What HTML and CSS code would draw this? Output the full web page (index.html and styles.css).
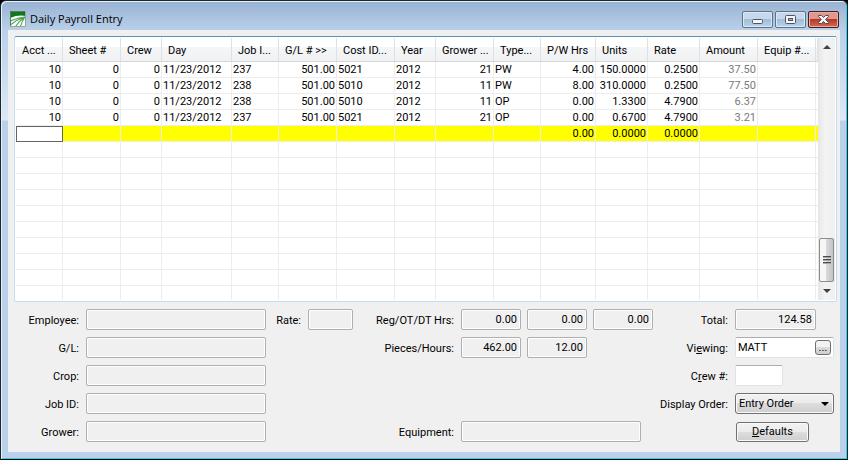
FILE: index.html
```
<!DOCTYPE html>
<html lang="en">
<head>
  <meta charset="UTF-8">
  <meta name="viewport" content="width=device-width, initial-scale=1.0">
  <title>Daily Payroll Entry</title>
  <link rel="stylesheet" href="styles.css">
</head>
<body>
  <div class="window">
    <header class="titlebar">
      <svg class="app-icon" viewBox="0 0 16 16" width="16" height="16" aria-hidden="true">
        <rect width="16" height="16" fill="#fbfdf9"/>
        <path d="M0 0 H16 V5 Q8 3.500 0 7 Z" fill="#0d7a1c"/>
        <path d="M1 9.800 Q8 6.500 15 6 M1 13.500 Q7 8.500 15 6 M5.500 15.500 Q9 10 15 6 M10.500 15.500 Q12 10 15 6" fill="none" stroke="#4fa258" stroke-width="1.100"/>
        <path d="M.5 16 V.5 H16" fill="none" stroke="#5f7862"/>
        <path d="M15.500 0 V15.500 H0" fill="none" stroke="#9aa398"/>
      </svg>
      <h1>Daily Payroll Entry</h1>
      <div class="window-buttons">
        <button type="button" class="win-btn" aria-label="Minimize">
          <svg viewBox="0 0 13 11" width="13" height="11"><rect x="1.500" y="5.500" width="10" height="4" rx="1" fill="#f6f6f6" stroke="#4f5766"/></svg>
        </button>
        <button type="button" class="win-btn" aria-label="Maximize">
          <svg viewBox="0 0 13 11" width="13" height="11"><rect x="1.500" y="1.500" width="10" height="8" rx="1" fill="#f6f6f6" stroke="#4f5766"/><rect x="4.500" y="4.500" width="4" height="2" fill="#8fb0d4" stroke="#4f5766"/></svg>
        </button>
        <button type="button" class="win-btn close" aria-label="Close">
          <svg viewBox="0 0 13 11" width="13" height="11"><path d="M1.500 1.500 H4.500 L6.500 3.500 L8.500 1.500 H11.500 V2.500 L8.700 5.500 L11.500 8.500 V9.500 H8.500 L6.500 7.500 L4.500 9.500 H1.500 V8.500 L4.300 5.500 L1.500 2.500 Z" fill="#f6f6f6" stroke="#5b4650"/></svg>
        </button>
      </div>
    </header>

    <main class="client">
      <div class="grid-panel">
        <div class="grid-view">
          <table>
            <colgroup>
              <col class="w47"><col class="w58"><col class="w41"><col class="w70">
              <col class="w47"><col class="w58"><col class="w58"><col class="w41">
              <col class="w58"><col class="w47"><col class="w55"><col class="w52">
              <col class="w52"><col class="w58"><col class="w58"><col>
            </colgroup>
            <thead>
              <tr>
                <th>Acct ...</th><th>Sheet #</th><th>Crew</th><th>Day</th>
                <th>Job I...</th><th>G/L # &gt;&gt;</th><th>Cost ID...</th><th>Year</th>
                <th>Grower ...</th><th>Type...</th><th>P/W Hrs</th><th>Units</th>
                <th>Rate</th><th>Amount</th><th>Equip #...</th><th></th>
              </tr>
            </thead>
            <tbody id="entries">
              <tr>
                <td class="num">10</td><td class="num">0</td><td class="num">0</td><td>11/23/2012</td>
                <td>237</td><td class="num">501.00</td><td>5021</td><td>2012</td>
                <td class="num">21</td><td>PW</td><td class="num">4.00</td><td class="num">150.0000</td>
                <td class="num">0.2500</td><td class="num amount">37.50</td><td></td><td></td>
              </tr>
              <tr>
                <td class="num">10</td><td class="num">0</td><td class="num">0</td><td>11/23/2012</td>
                <td>238</td><td class="num">501.00</td><td>5010</td><td>2012</td>
                <td class="num">11</td><td>PW</td><td class="num">8.00</td><td class="num">310.0000</td>
                <td class="num">0.2500</td><td class="num amount">77.50</td><td></td><td></td>
              </tr>
              <tr>
                <td class="num">10</td><td class="num">0</td><td class="num">0</td><td>11/23/2012</td>
                <td>238</td><td class="num">501.00</td><td>5010</td><td>2012</td>
                <td class="num">11</td><td>OP</td><td class="num">0.00</td><td class="num">1.3300</td>
                <td class="num">4.7900</td><td class="num amount">6.37</td><td></td><td></td>
              </tr>
              <tr>
                <td class="num">10</td><td class="num">0</td><td class="num">0</td><td>11/23/2012</td>
                <td>237</td><td class="num">501.00</td><td>5021</td><td>2012</td>
                <td class="num">21</td><td>OP</td><td class="num">0.00</td><td class="num">0.6700</td>
                <td class="num">4.7900</td><td class="num amount">3.21</td><td></td><td></td>
              </tr>
              <tr class="current">
                <td class="editing"><input type="text" aria-label="Acct #"></td><td></td><td></td><td></td>
                <td></td><td></td><td></td><td></td>
                <td></td><td></td><td class="num">0.00</td><td class="num">0.0000</td>
                <td class="num">0.0000</td><td></td><td></td><td></td>
              </tr>
            </tbody>
          </table>
        </div>
        <div class="scrollbar">
          <button type="button" class="arrow up" aria-label="Scroll up"></button>
          <div class="thumb"><i></i><i></i><i></i></div>
          <button type="button" class="arrow down" aria-label="Scroll down"></button>
        </div>
      </div>

      <form class="details">
        <label class="c1" for="employee">Employee:</label>
        <input class="c2" id="employee" type="text" readonly>
        <label class="c3" for="rate">Rate:</label>
        <input class="c4" id="rate" type="text" readonly>
        <label class="c5" for="reg">Reg/OT/DT Hrs:</label>
        <div class="c6 hours">
          <input class="num" id="reg" type="text" value="0.00" readonly>
          <input class="num" type="text" value="0.00" aria-label="OT hours" readonly>
          <input class="num" type="text" value="0.00" aria-label="DT hours" readonly>
        </div>
        <label class="c7" for="total">Total:</label>
        <input class="c8 num total" id="total" type="text" value="124.58" readonly>

        <label class="c1" for="gl">G/L:</label>
        <input class="c2" id="gl" type="text" readonly>
        <label class="c5" for="pieces">Pieces/Hours:</label>
        <div class="c6 hours">
          <input class="num" id="pieces" type="text" value="462.00" readonly>
          <input class="num" type="text" value="12.00" aria-label="Hours" readonly>
        </div>
        <label class="c7" for="viewing">Vi<u>e</u>wing:</label>
        <div class="c8 lookup">
          <input id="viewing" type="text" value="MATT">
          <button type="button" aria-label="Look up">...</button>
        </div>

        <label class="c1" for="crop">Crop:</label>
        <input class="c2" id="crop" type="text" readonly>
        <label class="c7" for="crew">C<u>r</u>ew #:</label>
        <input class="c8 crew" id="crew" type="text">

        <label class="c1" for="job">Job ID:</label>
        <input class="c2" id="job" type="text" readonly>
        <label class="c7" for="order">Display Order:</label>
        <div class="c8 dropdown">
          <select id="order">
            <option>Entry Order</option>
          </select>
        </div>

        <label class="c1" for="grower">Grower:</label>
        <input class="c2" id="grower" type="text" readonly>
        <label class="c5" for="equipment">Equipment:</label>
        <input class="c6 equipment" id="equipment" type="text" readonly>
        <button type="button" class="c8 defaults"><u>D</u>efaults</button>
      </form>
    </main>
  </div>

  <script>
    // pad the list with blank rows below the entry line
    const entries = document.getElementById('entries');
    for (let r = 0; r < 10; r++) {
      const row = entries.insertRow();
      for (let c = 0; c < 16; c++) {
        row.insertCell();
      }
    }
  </script>
</body>
</html>
```
FILE: styles.css
```
* {
  box-sizing: border-box;
}

body {
  margin: 0;
  background: #000;
  font-family: Roboto, sans-serif;
  font-size: 11px;
  line-height: 16px;
  color: #000;
}

input,
select,
button {
  margin: 0;
  font: inherit;
  color: inherit;
}

.window {
  display: flex;
  flex-direction: column;
  height: 100vh;
  min-width: 840px;
  padding: 0 6px 7px;
  border: 1px solid #1c2630;
  border-bottom-color: #000;
  border-radius: 6px 6px 0 0;
  background: linear-gradient(#98b2d2 0, #b9d1ea 30px, #dce8f5 119px, #b9d1ea 120px);
  box-shadow: inset 1px 1px 0 #e8f0f8, inset -1px -1px 0 #2bd2ec;
}

.titlebar {
  display: flex;
  align-items: center;
  height: 29px;
  padding: 7px 2px 0 3px;
}

.titlebar h1 {
  flex: 1;
  margin: 0 0 0 4px;
  font-family: "Open Sans", sans-serif;
  font-size: 11px;
  font-weight: normal;
}

.window-buttons {
  display: flex;
  gap: 2px;
}

.win-btn {
  display: flex;
  align-items: center;
  justify-content: center;
  width: 31px;
  height: 17px;
  padding: 0;
  border: 1px solid #5f7288;
  border-radius: 2px;
  background: linear-gradient(#c6d8eb 50%, #a3bdd8 50%, #b9d3ec);
  box-shadow: inset 0 0 0 1px #dce8f4;
}

.win-btn.close {
  border-color: #4a1a20;
  background: linear-gradient(#dd9a8c 50%, #b93824 50%, #cf6c50);
  box-shadow: inset 0 0 0 1px #e6b0a4;
}

.client {
  flex: 1;
  display: flex;
  flex-direction: column;
  min-height: 0;
  margin: 0 1px;
  padding: 6px 3px 10px 6px;
  background: #f0f0f0;
}

.grid-panel {
  flex: 1;
  display: flex;
  min-height: 0;
  padding: 1px;
  border: 1px solid #c3dcee;
  border-top-color: #5a92ba;
  border-radius: 2px;
  background: #fff;
}

.grid-view {
  flex: 1;
  overflow: hidden;
}

table {
  width: 100%;
  table-layout: fixed;
  border-collapse: separate;
  border-spacing: 0;
}

.w41 { width: 41px; }
.w47 { width: 47px; }
.w52 { width: 52px; }
.w55 { width: 55px; }
.w58 { width: 58px; }
.w70 { width: 70px; }

th {
  height: 24px;
  padding: 2px 0 0 6px;
  border-right: 1px solid #dfe0e2;
  border-bottom: 1px solid #d5d5d5;
  background: linear-gradient(#fff 40%, #f5f6f8 40%, #f0f1f3);
  font-weight: normal;
  text-align: left;
  white-space: nowrap;
}

th:last-child {
  padding: 0;
}

td {
  height: 16px;
  padding: 1px 1px 0;
  border-right: 1px solid #ededed;
  border-bottom: 1px solid #ededed;
  line-height: 14px;
  white-space: nowrap;
}

td:last-child {
  padding: 0;
  border-right: 0;
}

.num {
  text-align: right;
}

.amount {
  color: #7a7a7a;
}

.current td {
  background: #ff0;
}

.current .editing {
  padding: 0;
  border: 0;
}

.editing input {
  display: block;
  width: 100%;
  height: 16px;
  padding: 0 2px;
  border: 1px solid #646464;
  background: #fff;
  outline: 0;
}

.scrollbar {
  display: flex;
  flex-direction: column;
  width: 17px;
  background: linear-gradient(90deg, #e6e6e6, #f3f3f3 40%, #efefef);
}

.arrow {
  display: flex;
  align-items: center;
  justify-content: center;
  height: 18px;
  padding: 0;
  border: 0;
  background: none;
}

.arrow::before {
  content: "";
  border: 4px solid transparent;
  border-top: 0;
  border-bottom: 4px solid #404040;
}

.arrow.down::before {
  border-top: 4px solid #404040;
  border-bottom: 0;
}

.thumb {
  display: flex;
  flex-direction: column;
  align-items: center;
  justify-content: center;
  gap: 1px;
  height: 44px;
  margin: auto 1px 0;
  border: 1px solid #8c8c8c;
  border-radius: 2px;
  background: linear-gradient(90deg, #f6f6f6 45%, #d9d9dc 50%, #c4c4c8);
}

.thumb i {
  width: 8px;
  height: 2px;
  border-top: 1px solid #4c4c4c;
  background: #a8a8a8;
}

.details {
  display: grid;
  grid-template-columns: 65px 180px 28px 45px 94px 192px 1fr 99px;
  grid-auto-rows: 21px;
  gap: 7px;
  margin: 7px 5px 0 0;
}

.c1 { grid-column: 1; }
.c2 { grid-column: 2; }
.c3 { grid-column: 3; }
.c4 { grid-column: 4; }
.c5 { grid-column: 5; }
.c6 { grid-column: 6; }
.c7 { grid-column: 7; }
.c8 { grid-column: 8; }

.details label {
  padding-top: 4px;
  text-align: right;
  white-space: nowrap;
}

.details input {
  width: 100%;
  height: 21px;
  padding: 0 3px 1px 2px;
  border: 1px solid #dde2ea;
  border-top-color: #abadb3;
  border-radius: 2px;
  background: #fff;
}

.details input:read-only {
  border-color: #afafaf;
  background: #f0f0f0;
  box-shadow: inset 0 0 0 1px #fff;
}

.hours {
  display: grid;
  grid-template-columns: repeat(3, 60px);
  gap: 6px;
}

.details .total {
  width: 81px;
}

.details .crew {
  width: 48px;
}

.details .equipment {
  width: 180px;
}

.lookup {
  position: relative;
}

.lookup button {
  position: absolute;
  top: 3px;
  right: 3px;
  width: 16px;
  height: 15px;
  padding: 0;
  border: 1px solid #707070;
  border-radius: 3px;
  background: linear-gradient(#f2f2f2 50%, #dcdcdc 50%, #cfcfcf);
  line-height: 11px;
}

.dropdown {
  position: relative;
}

.dropdown::after {
  content: "";
  position: absolute;
  top: 9px;
  right: 5px;
  border: 4px solid transparent;
  border-top-color: #000;
  border-bottom: 0;
  pointer-events: none;
}

.dropdown select {
  display: block;
  width: 100%;
  height: 21px;
  padding: 0 3px;
  appearance: none;
}

.dropdown select,
.defaults {
  border: 1px solid #707070;
  border-radius: 3px;
  background: linear-gradient(#f2f2f2, #ebebeb 50%, #dddddd 50%, #cfcfcf);
  box-shadow: inset 0 0 0 1px #fafafa;
}

.defaults {
  width: 73px;
  height: 20px;
  margin: 1px;
  padding: 0;
  line-height: 16px;
}
```
